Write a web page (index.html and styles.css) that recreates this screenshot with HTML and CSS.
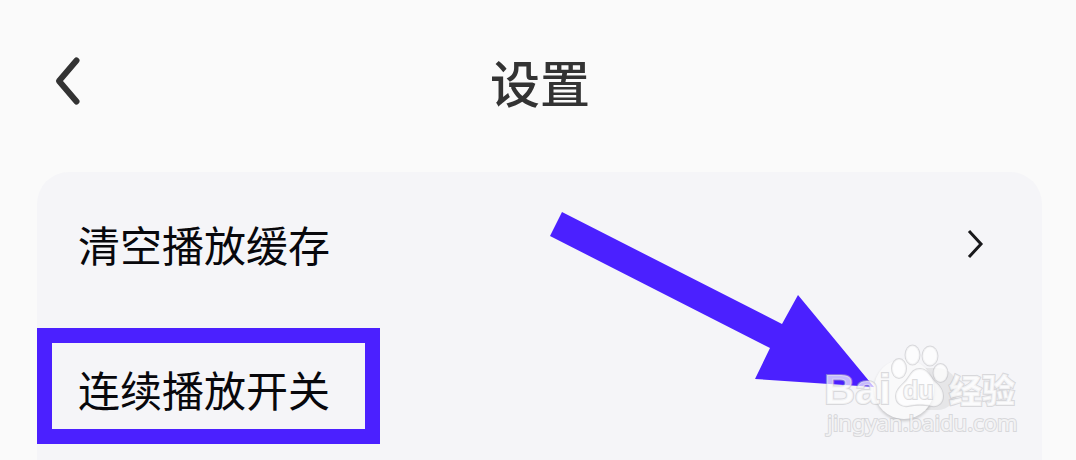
FILE: index.html
```html
<!DOCTYPE html>
<html lang="zh-CN">
<head>
<meta charset="utf-8">
<meta name="viewport" content="width=device-width, initial-scale=1">
<title>设置</title>
<link rel="stylesheet" href="styles.css">
</head>
<body>
<div class="screen">
  <header class="topbar">
    <button class="back" type="button" aria-label="返回">
      <svg width="28" height="50" viewBox="0 0 28 50" aria-hidden="true"><path d="M22.500 4.500L5 25L22.500 45.500"/></svg>
    </button>
    <h1 class="title">设置</h1>
  </header>
  <main class="card">
    <button class="row" type="button">
      <span>清空播放缓存</span>
      <svg class="chevron" width="20" height="30" viewBox="0 0 20 30" aria-hidden="true"><path d="M3 2L15 15L3 28"/></svg>
    </button>
    <div class="row">
      <label for="continuous">连续播放开关</label>
      <input class="switch" id="continuous" type="checkbox" role="switch">
      <div class="highlight"></div>
    </div>
  </main>
  <svg class="arrow" width="324" height="178" viewBox="0 0 324 178" aria-hidden="true">
    <path d="M12 0L232 112L248 83L324 175L205 167L220 136L0 24Z"/>
  </svg>
  <svg class="watermark" width="204" height="100" viewBox="0 0 204 100" role="img" aria-label="Baidu 经验 jingyan.baidu.com">
    <g class="mark">
      <text class="brand" x="2" y="62">Bai</text>
      <ellipse cx="77" cy="26.500" rx="7" ry="9.500"/>
      <ellipse cx="90.500" cy="13" rx="7" ry="9.500"/>
      <ellipse cx="108" cy="14" rx="7.500" ry="9.500"/>
      <ellipse cx="118.500" cy="31" rx="7" ry="9"/>
      <path d="M98 27C106 27 108 35 113 40C119 45 121 49 121 54C121 61 116 65 110 64C101 62 95 62 86 64C78 65 74 60 74 54C74 48 79 44 84 39C89 33 90 27 98 27Z"/>
      <text class="du" x="81" y="57">du</text>
      <text class="name" x="127" y="61">经验</text>
      <text class="address" x="5" y="89">jingyan.baidu.com</text>
    </g>
  </svg>
</div>
</body>
</html>
```
FILE: styles.css
```css
* {
  box-sizing: border-box;
}

body {
  margin: 0;
  overflow: hidden;
  background: #fafafa;
  color: #08080c;
  font-family: "Noto Sans CJK SC", sans-serif;
}

.screen {
  position: relative;
}

.topbar {
  display: grid;
  grid-template-columns: 1fr auto 1fr;
  align-items: center;
  height: 172px;
  padding: 0 50px 10px 54px;
}

.back {
  display: flex;
  justify-self: start;
  padding: 0;
  border: 0;
  background: none;
}

.back path {
  fill: none;
  stroke: #333;
  stroke-width: 6;
  stroke-linecap: round;
  stroke-linejoin: round;
}

.title {
  margin: 0;
  color: #333;
  font-size: 50px;
  font-weight: 500;
  line-height: 72px;
}

.card {
  margin: 0 34px 0 37px;
  border-radius: 32px 32px 0 0;
  background: #f5f5f8;
}

.row {
  position: relative;
  display: flex;
  align-items: center;
  justify-content: space-between;
  width: 100%;
  height: 145px;
  padding: 0 56px 2px 41px;
  border: 0;
  background: none;
  color: inherit;
  font: inherit;
  font-size: 42px;
  line-height: 60px;
  text-align: left;
}

.chevron path {
  fill: none;
  stroke: #18181b;
  stroke-width: 3;
}

.switch {
  appearance: none;
  display: flex;
  align-items: center;
  width: 84px;
  height: 42px;
  margin: 0 28px 0 0;
  border-radius: 21px;
  background: #e6e6e8;
}

.switch::before {
  content: "";
  flex: none;
  width: 60px;
  height: 60px;
  border-radius: 50%;
  background: #f9f9fa;
  box-shadow: 0 2px 3px #00000030;
}

.highlight {
  position: absolute;
  top: 11px;
  left: 0;
  width: 343px;
  height: 116px;
  border: 15px solid #4b20ff;
  pointer-events: none;
}

.arrow {
  position: absolute;
  top: 212px;
  left: 550px;
  fill: #4b20ff;
  pointer-events: none;
}

.watermark {
  position: absolute;
  top: 342px;
  right: 50px;
  pointer-events: none;
}

.mark {
  fill: #fff;
  fill-opacity: 0.7;
  stroke: #bbbbbf;
  stroke-opacity: 0.5;
  stroke-width: 2;
  paint-order: stroke;
}

.brand {
  font: bold 43px "Liberation Sans", sans-serif;
}

.du {
  font: bold 25px "Liberation Sans", sans-serif;
}

.name {
  font: 900 33px "Noto Sans CJK SC", sans-serif;
}

.address {
  font: 22px "Noto Sans", sans-serif;
}
```
